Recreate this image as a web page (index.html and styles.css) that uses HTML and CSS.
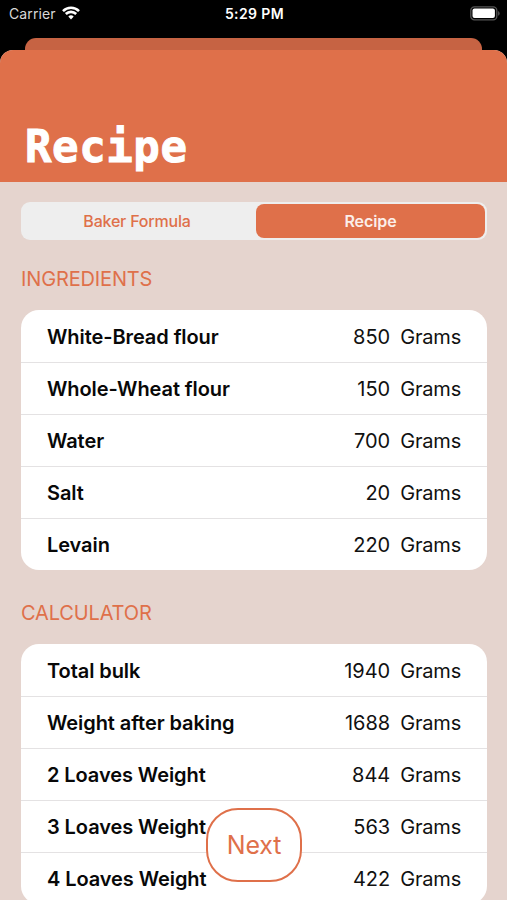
FILE: index.html
```html
<!DOCTYPE html>
<html lang="en">
<head>
  <meta charset="UTF-8" />
  <meta name="viewport" content="width=device-width, initial-scale=1.0" />
  <title>Recipe</title>
  <link rel="stylesheet" href="styles.css">
</head>
<body>
  <div class="status-bar">
    <div class="carrier">
      <span>Carrier</span>
      <svg class="wifi" viewBox="0 0 18 14" width="18" height="14">
        <path d="M1 5.1a11.4 11.4 0 0 1 16 0" />
        <path d="M3.8 8a7.4 7.4 0 0 1 10.4 0" />
        <path class="dot" d="M9 13.4l-2.7-2.8a3.9 3.9 0 0 1 5.4 0z" />
      </svg>
    </div>
    <span class="time">5:29 PM</span>
    <svg class="battery" viewBox="0 0 30 15" width="30" height="15">
      <rect class="shell" x="0.8" y="0.8" width="26" height="13" rx="3.6" />
      <rect class="charge" x="2.5" y="2.6" width="22.4" height="9.4" rx="2" />
      <path class="tip" d="M28.1 5v4.8q1.5-.8 1.5-2.4t-1.5-2.4z" />
    </svg>
  </div>

  <div class="back-sheet"></div>

  <div class="sheet">
    <header>
      <h1>Recipe</h1>
    </header>

    <main>
      <div class="tabs">
        <button type="button">Baker Formula</button>
        <button type="button" class="active">Recipe</button>
      </div>

      <h2>INGREDIENTS</h2>
      <ul class="card">
        <li><b>White-Bread flour</b><span class="amount">850</span><span class="unit">Grams</span></li>
        <li><b>Whole-Wheat flour</b><span class="amount">150</span><span class="unit">Grams</span></li>
        <li><b>Water</b><span class="amount">700</span><span class="unit">Grams</span></li>
        <li><b>Salt</b><span class="amount">20</span><span class="unit">Grams</span></li>
        <li><b>Levain</b><span class="amount">220</span><span class="unit">Grams</span></li>
      </ul>

      <h2>CALCULATOR</h2>
      <ul class="card">
        <li><b>Total bulk</b><span class="amount">1940</span><span class="unit">Grams</span></li>
        <li><b>Weight after baking</b><span class="amount">1688</span><span class="unit">Grams</span></li>
        <li><b>2 Loaves Weight</b><span class="amount">844</span><span class="unit">Grams</span></li>
        <li><b>3 Loaves Weight</b><span class="amount">563</span><span class="unit">Grams</span></li>
        <li><b>4 Loaves Weight</b><span class="amount">422</span><span class="unit">Grams</span></li>
      </ul>
    </main>
  </div>

  <button type="button" class="next">Next</button>
</body>
</html>
```
FILE: styles.css
```css
* {
  box-sizing: border-box;
}

body {
  margin: 0;
  height: 100vh;
  overflow: hidden;
  display: flex;
  flex-direction: column;
  background: #000;
  font-family: Inter, sans-serif;
}

button {
  font-family: inherit;
  border: none;
  padding: 0;
  cursor: pointer;
}

/* status bar */
.status-bar {
  height: 38px;
  flex-shrink: 0;
  display: grid;
  grid-template-columns: 1fr auto 1fr;
  align-items: start;
  padding: 5px 7px 0 9px;
  font-size: 14px;
  line-height: 18px;
  color: #fff;
}

.carrier {
  display: flex;
  gap: 6px;
  color: #d8d8d8;
  letter-spacing: 0.1px;
}

.wifi {
  margin-top: 1px;
}

.wifi path {
  fill: none;
  stroke: #fff;
  stroke-width: 2.6;
}

.wifi .dot {
  fill: #fff;
  stroke: none;
}

.time {
  font-weight: 600;
  letter-spacing: 0.4px;
}

.battery {
  justify-self: end;
  margin-top: 1px;
}

.battery .shell {
  fill: none;
  stroke: #555;
  stroke-width: 1.3;
}

.battery .charge {
  fill: #fff;
}

.battery .tip {
  fill: #555;
}

/* sheets */
.back-sheet {
  height: 12px;
  flex-shrink: 0;
  margin: 0 25px;
  background: #c66343;
  border-radius: 11px 11px 0 0;
}

.sheet {
  flex: 1;
  min-height: 0;
  overflow: hidden;
  background: #e5d4ce;
  border-radius: 13px 13px 0 0;
}

header {
  height: 132px;
  display: flex;
  align-items: flex-end;
  padding: 0 25px 8px;
  background: #df704a;
}

h1 {
  margin: 0;
  font-family: "DejaVu Sans Mono", monospace;
  font-size: 44px;
  line-height: 54px;
  font-weight: bold;
  letter-spacing: 0.6px;
  color: #fff;
  -webkit-text-stroke: 1px #fff;
}

main {
  padding: 20px 20px 0 21px;
}

.tabs {
  height: 38px;
  display: grid;
  grid-template-columns: 1fr 229px;
  padding: 2px;
  background: #eee;
  border-radius: 9px;
}

.tabs button {
  background: none;
  color: #df704a;
  font-size: 16px;
  font-weight: 500;
  letter-spacing: -0.2px;
  padding-right: 5px;
  border-radius: 8px;
}

.tabs .active {
  background: #df704a;
  color: #fbeee9;
  font-weight: 600;
  letter-spacing: -0.1px;
  padding: 0;
}

h2 {
  margin: 26px 0 18px;
  font-size: 20px;
  line-height: 26px;
  font-weight: 400;
  letter-spacing: -0.15px;
  color: #df704a;
}

.card {
  list-style: none;
  margin: 0 0 30px;
  padding: 0;
  background: #fff;
  border-radius: 18px;
}

.card li {
  height: 52px;
  display: flex;
  align-items: center;
  padding: 1px 26px 0;
  font-size: 20px;
  color: #111;
}

.card li + li {
  padding-top: 0;
  border-top: 1px solid #e4e2e3;
}

.card b {
  flex: 1;
  font-weight: 600;
  letter-spacing: -0.08px;
  color: #080808;
}

.unit {
  margin-left: 10px;
  letter-spacing: -0.2px;
}

.next {
  position: absolute;
  left: 206px;
  top: 808px;
  width: 96px;
  height: 74px;
  border: 2px solid #df704a;
  border-radius: 32px;
  background: #fff;
  color: #df704a;
  font-size: 25px;
  letter-spacing: -0.2px;
}
```
